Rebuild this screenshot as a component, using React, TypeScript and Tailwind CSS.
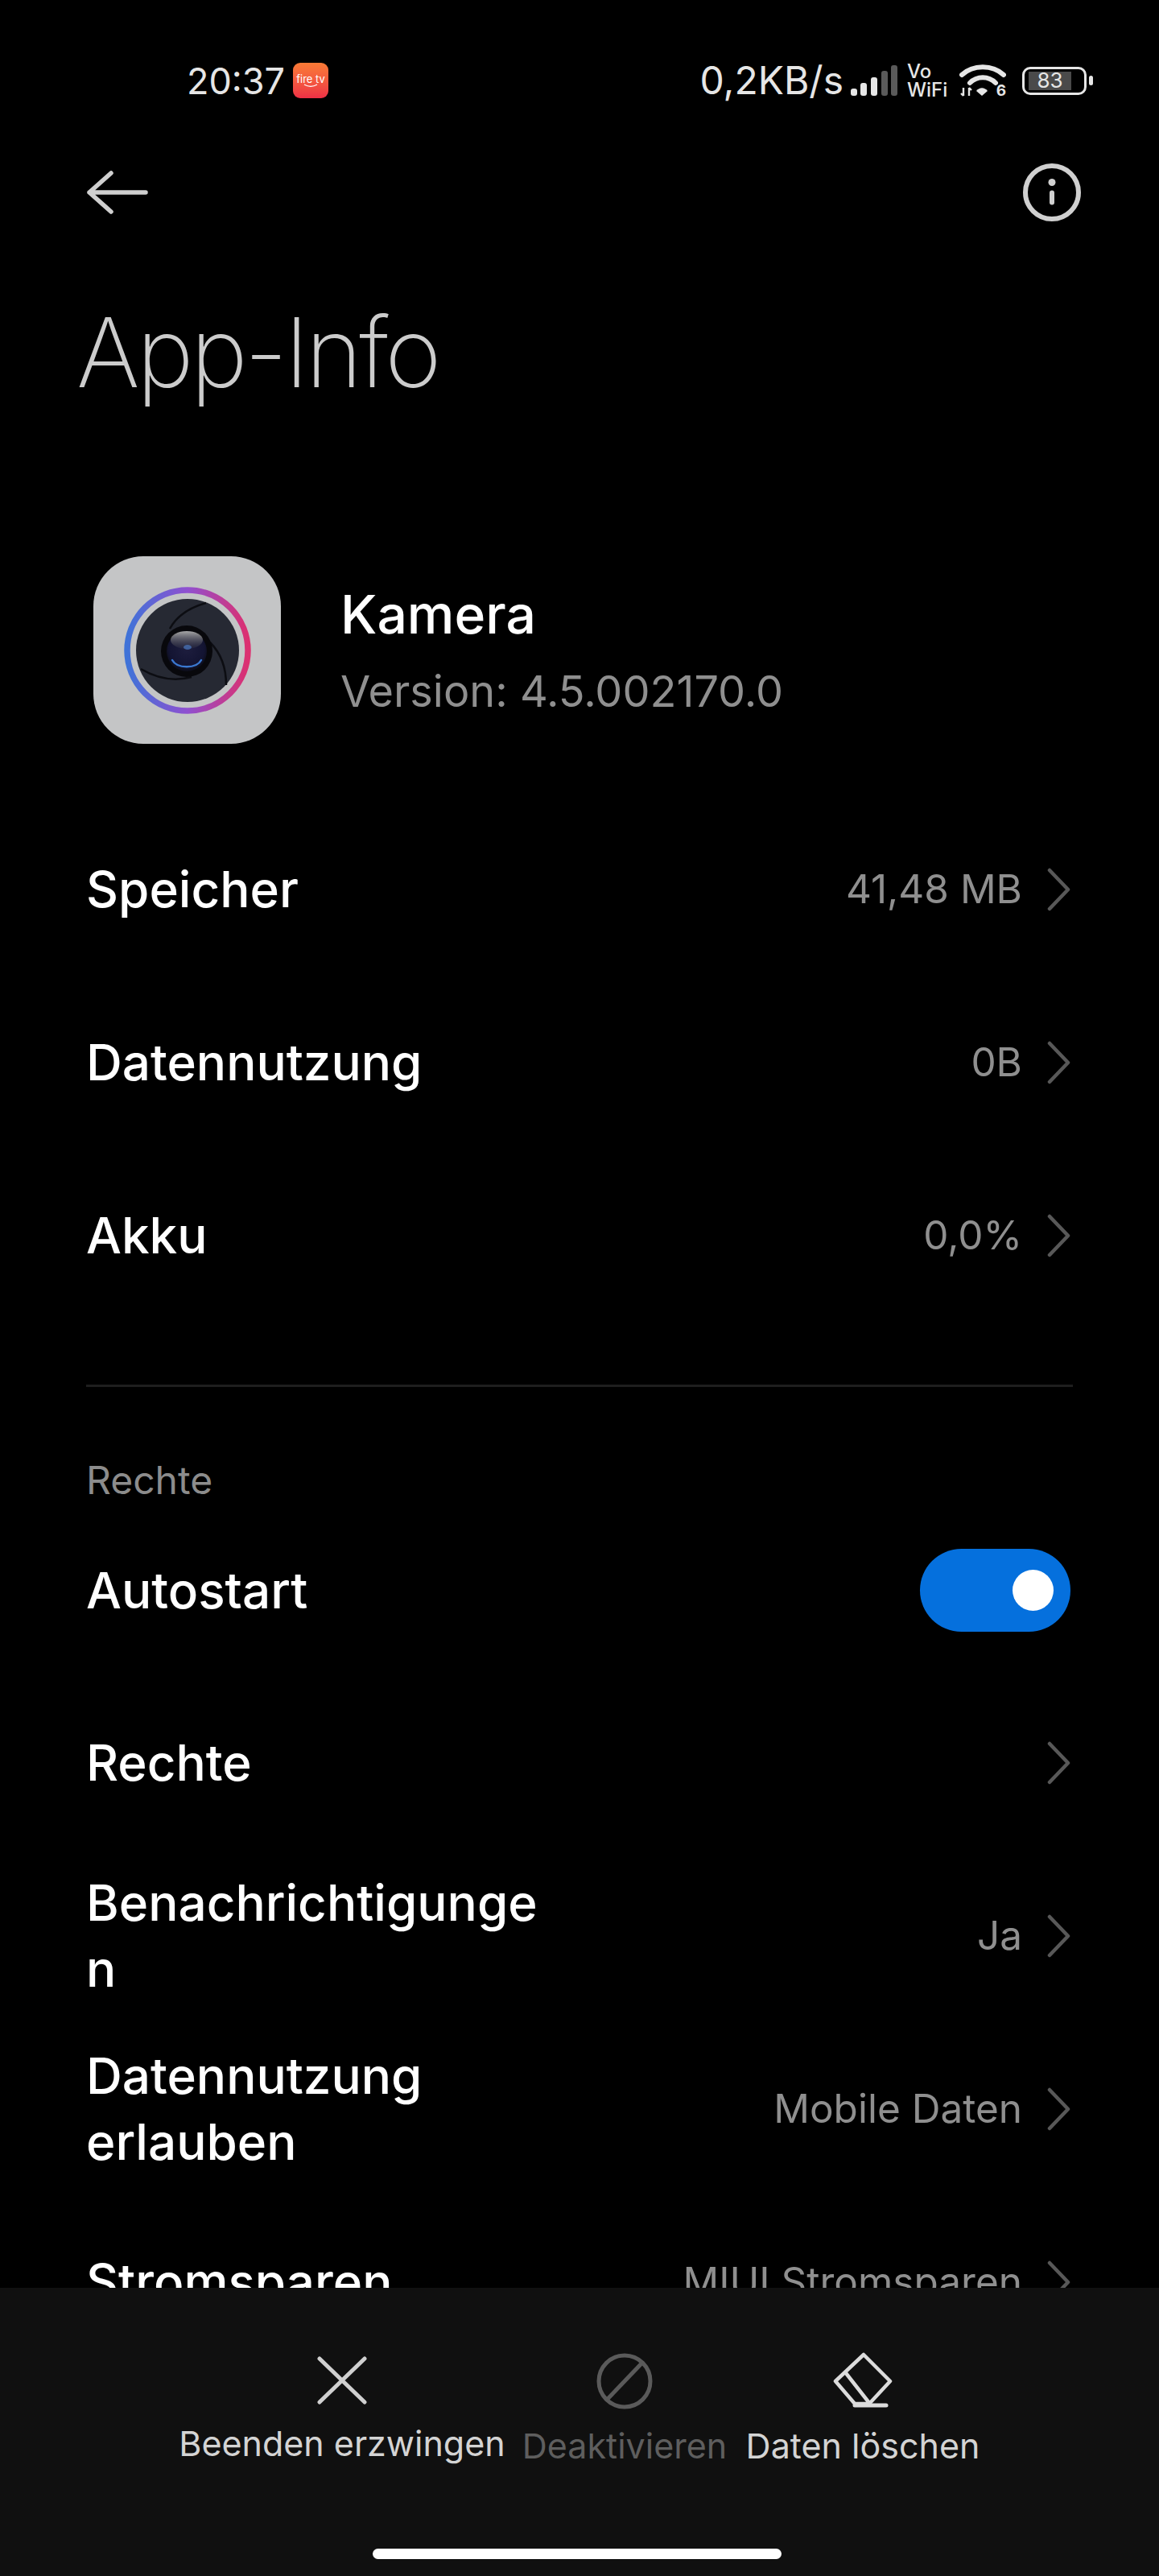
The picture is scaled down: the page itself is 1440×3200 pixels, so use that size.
import React from "react";

const font = "font-['Inter','Noto_Sans',sans-serif]";

function Chevron() {
  return (
    <svg width="30" height="54" viewBox="0 0 30 54" fill="none" className="shrink-0">
      <path d="M4 3 L27 27 L4 51" stroke="#585858" strokeWidth="4.5" strokeLinecap="round" strokeLinejoin="round" />
    </svg>
  );
}

function Row({ label, value }: { label: React.ReactNode; value?: string }) {
  return (
    <div className="flex items-center justify-between h-[215px] pl-[107px] pr-[110px]">
      <div className="w-[600px] text-[62px] leading-[82px] font-medium text-white">{label}</div>
      <div className="flex items-center gap-[30px]">
        {value && <span className="text-[49.5px] text-[#8f8f8f]">{value}</span>}
        <Chevron />
      </div>
    </div>
  );
}

function Signal() {
  return (
    <svg width="58" height="38" viewBox="0 0 58 38" className="shrink-0 ml-[9px]">
      <rect x="0" y="29" width="8" height="9" rx="3" fill="#e6e6e6" />
      <rect x="12" y="22" width="8" height="16" rx="3" fill="#e6e6e6" />
      <rect x="25" y="15" width="8" height="23" rx="3" fill="#e6e6e6" />
      <rect x="38" y="7" width="8" height="31" rx="3" fill="#5a5a5a" />
      <rect x="50" y="0" width="8" height="38" rx="3" fill="#5a5a5a" />
    </svg>
  );
}

function Wifi() {
  return (
    <div className="relative ml-[13px] w-[58px] h-[40px] shrink-0">
      <svg width="58" height="40" viewBox="0 0 58 40" fill="none">
        <path d="M3 13 C17 0 41 0 55 13" stroke="#e6e6e6" strokeWidth="6" strokeLinecap="round" />
        <path d="M13 23 C22 14 36 14 45 23" stroke="#e6e6e6" strokeWidth="6" strokeLinecap="round" />
        <path d="M21 33 C25 28 31 28 35 33 L28 39 Z" fill="#e6e6e6" />
        <path d="M5 29 V39 M2 36 L5 39 M12 39 V29 M12 29 L15 32" stroke="#e6e6e6" strokeWidth="2.4" />
      </svg>
      <span className="absolute right-0 bottom-[-2px] text-[19px] leading-[18px] font-bold text-[#e6e6e6]">6</span>
    </div>
  );
}

function Battery() {
  return (
    <div className="flex items-center gap-[3px] ml-[20px] shrink-0">
      <div className="w-[80px] h-[35px] rounded-[10px] border-[3px] border-[#e6e6e6] flex items-center pl-[5px]">
        <div className="w-[53px] h-[23px] bg-[#4a4a4a] flex items-center justify-center text-[26px] leading-none text-[#e6e6e6]">
          83
        </div>
      </div>
      <div className="w-[5px] h-[12px] rounded-full bg-[#e6e6e6]" />
    </div>
  );
}

function StatusBar() {
  return (
    <div className="flex items-center justify-between h-[88px] mt-[56px] pl-[232px] pr-[82px] text-[#e6e6e6]">
      <div className="flex items-center gap-[10px]">
        <span className="text-[45px] leading-none">20:37</span>
        <div className="w-[44px] h-[44px] rounded-[9px] bg-gradient-to-b from-[#f97a35] to-[#ee2f45] flex flex-col items-center justify-center">
          <span className="text-[13px] leading-[12px] text-white">fire tv</span>
          <svg width="20" height="5" viewBox="0 0 20 5" fill="none">
            <path d="M2 1 C7 4 13 4 18 1" stroke="#fff" strokeWidth="1.2" />
          </svg>
        </div>
      </div>
      <div className="flex items-center">
        <span className="text-[48px] leading-none">0,2KB/s</span>
        <Signal />
        <div className="ml-[12px] w-[52px] text-[24px] leading-[23px] font-medium">
          <div>Vo</div>
          <div>WiFi</div>
        </div>
        <Wifi />
        <Battery />
      </div>
    </div>
  );
}

function CameraIcon() {
  return (
    <div className="w-[233px] h-[233px] rounded-[62px] bg-[#c4c5c6] flex items-center justify-center shrink-0">
      <svg width="160" height="160" viewBox="0 0 160 160">
        <defs>
          <linearGradient id="ring" x1="0" y1="0.5" x2="1" y2="0.5">
            <stop offset="0" stopColor="#3f73d8" />
            <stop offset="0.5" stopColor="#9050d0" />
            <stop offset="1" stopColor="#dc3070" />
          </linearGradient>
          <radialGradient id="lens" cx="0.5" cy="0.45" r="0.55">
            <stop offset="0" stopColor="#1d1d3e" />
            <stop offset="0.8" stopColor="#131432" />
            <stop offset="1" stopColor="#0c0d18" />
          </radialGradient>
          <linearGradient id="glare" x1="0" y1="0" x2="0" y2="1">
            <stop offset="0" stopColor="#a8a8a8" />
            <stop offset="1" stopColor="#44444c" stopOpacity="0.2" />
          </linearGradient>
        </defs>
        <circle cx="80" cy="80" r="75" fill="none" stroke="url(#ring)" strokeWidth="7.5" />
        <circle cx="80" cy="80" r="64" fill="#262933" />
        <path d="M103 21 C82 27 66 38 58 53 M22 103 C44 116 66 118 85 113 M128 123 C128 100 120 82 108 70" fill="none" stroke="#0c0d12" strokeWidth="2.5" />
        <circle cx="79" cy="81" r="32" fill="#08080c" />
        <circle cx="79" cy="81" r="25" fill="url(#lens)" />
        <path d="M61 92 C67 103 91 103 97 92" fill="none" stroke="#3a78d0" strokeWidth="2.5" strokeLinecap="round" />
        <ellipse cx="79" cy="67" rx="20" ry="11" fill="url(#glare)" />
        <ellipse cx="80" cy="76" rx="5" ry="3" fill="#4a78c0" opacity="0.7" />
      </svg>
    </div>
  );
}

export default function App() {
  return (
    <div className={`${font} w-[1440px] h-[3200px] bg-black text-white flex flex-col overflow-hidden`}>
      <div className="flex-1 min-h-0 overflow-hidden">
        <StatusBar />
        <div className="flex items-center justify-between h-[100px] mt-[45px] pl-[108px] pr-[96px]">
          <svg width="76" height="56" viewBox="0 0 76 56" fill="none">
            <path d="M30 4 L3 28 L30 52 M3 28 H73" stroke="#cfcfcf" strokeWidth="5.5" strokeLinecap="round" strokeLinejoin="round" />
          </svg>
          <svg width="74" height="74" viewBox="0 0 74 74" fill="none">
            <circle cx="37" cy="37" r="33" stroke="#d0d0d0" strokeWidth="6" />
            <circle cx="37" cy="24.5" r="4.5" fill="#d0d0d0" />
            <path d="M37 37.5 V49.5" stroke="#d0d0d0" strokeWidth="6" strokeLinecap="round" />
          </svg>
        </div>
        <h1 className="pl-[95px] mt-[79px] text-[120px] leading-[140px] font-extralight tracking-[-4px] text-[#cccccc]">App-Info</h1>
        <div className="flex items-center gap-[74px] pl-[116px] mt-[183px]">
          <CameraIcon />
          <div>
            <div className="text-[66px] leading-[76px] font-medium text-white">Kamera</div>
            <div className="mt-[26px] text-[54px] leading-[64px] text-[#8f8f8f]">Version: 4.5.002170.0</div>
          </div>
        </div>
        <div className="mt-[73px]">
          <Row label="Speicher" value="41,48 MB" />
          <Row label="Datennutzung" value="0B" />
          <Row label="Akku" value="0,0%" />
        </div>
        <div className="mx-[107px] mt-[78px] h-[3px] bg-[#1e1e1e]" />
        <div className="pl-[107px] mt-[88px] text-[48px] leading-[56px] text-[#8c8c8c]">Rechte</div>
        <div className="flex items-center justify-between h-[214px] mt-[1px] pl-[107px] pr-[110px]">
          <div className="text-[62px] font-medium text-white">Autostart</div>
          <div className="w-[187px] h-[103px] rounded-full bg-[#0570dd] flex items-center justify-end pr-[21px]">
            <div className="w-[51px] h-[51px] rounded-full bg-white" />
          </div>
        </div>
        <Row label="Rechte" />
        <Row label={<>Benachrichtigunge<br />n</>} value="Ja" />
        <Row label={<>Datennutzung<br />erlauben</>} value="Mobile Daten" />
        <Row label="Stromsparen" value="MIUI Stromsparen" />
      </div>
      <div className="relative h-[358px] shrink-0 bg-[#101010] flex pl-[212px]">
        <div className="flex items-start pt-[84px] text-[43px] leading-[60px] whitespace-nowrap text-[#d4d4d4]">
          <div className="w-[426px] flex flex-col items-center">
            <svg width="62" height="62" viewBox="0 0 62 62" fill="none">
              <path d="M3 4 L59 58 M59 4 L3 58" stroke="#d0d0d0" strokeWidth="5" strokeLinecap="round" />
            </svg>
            <span className="mt-[17px]">Beenden erzwingen</span>
          </div>
          <div className="w-[276px] flex flex-col items-center text-[#5e5e5e]">
            <svg width="70" height="70" viewBox="0 0 70 70" fill="none" className="-mt-[3px]">
              <circle cx="35" cy="35" r="32" stroke="#5a5a5a" strokeWidth="5" />
              <path d="M13 58 L57 12" stroke="#5a5a5a" strokeWidth="5" />
            </svg>
            <span className="mt-[15px]">Deaktivieren</span>
          </div>
          <div className="w-[316px] flex flex-col items-center">
            <svg width="74" height="70" viewBox="0 0 74 70" fill="none" className="-mt-[4px]">
              <path d="M38 3 L71 36 L45 64 H27 L3 36 Z M16 26 L45 63" stroke="#dcdcdc" strokeWidth="4.5" strokeLinejoin="round" />
              <path d="M27 66 H66" stroke="#dcdcdc" strokeWidth="5" strokeLinecap="round" />
            </svg>
            <span className="mt-[16px]">Daten löschen</span>
          </div>
        </div>
        <div className="absolute left-[463px] bottom-[21px] w-[508px] h-[13px] rounded-full bg-white" />
      </div>
    </div>
  );
}
